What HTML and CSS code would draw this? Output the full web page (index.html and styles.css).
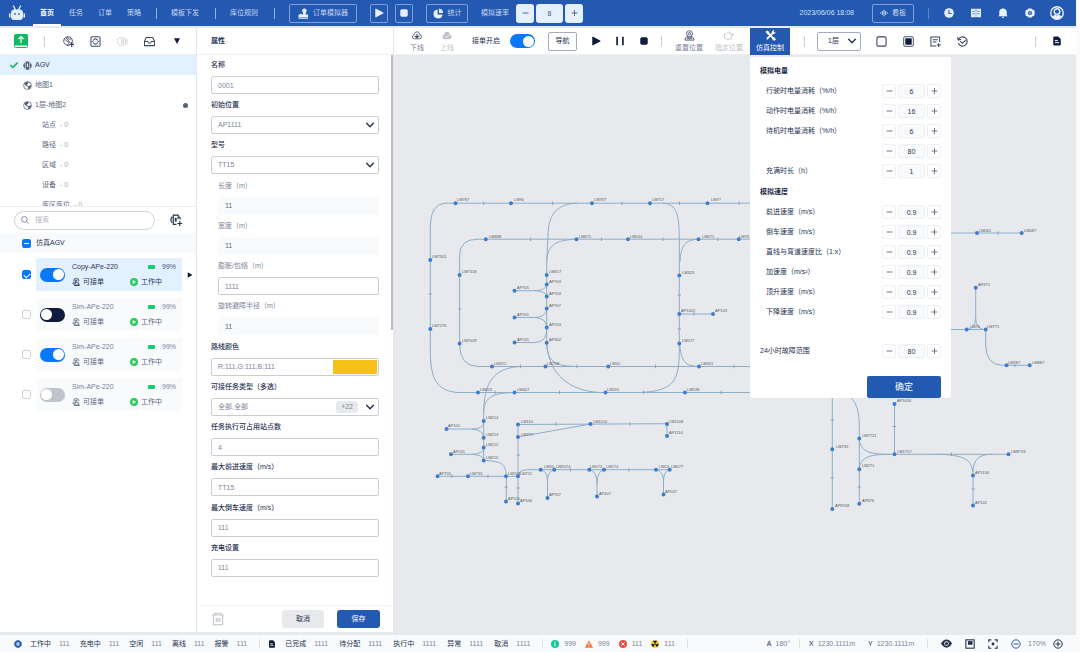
FILE: index.html
```html
<!DOCTYPE html>
<html lang="zh-CN">
<head>
<meta charset="utf-8">
<title>AGV 仿真调度</title>
<link rel="stylesheet" href="styles.css">
</head>
<body>
<svg class="sprite" aria-hidden="true">
  <symbol id="robot" viewBox="0 0 32 32"><path d="M9 2l4 8M23 2l-4 8" stroke="currentColor" stroke-width="2.6" stroke-linecap="round"/><path fill="currentColor" fill-rule="evenodd" d="M11 9h10q7 0 7 7v7q0 7-7 7H11q-7 0-7-7v-7q0-7 7-7zm1 7a1.500 1.500 0 0 0-1.500 1.500v1a1.500 1.500 0 0 0 3 0v-1A1.500 1.500 0 0 0 12 16zm8 0a1.500 1.500 0 0 0-1.500 1.500v1a1.500 1.500 0 0 0 3 0v-1A1.500 1.500 0 0 0 20 16z"/><path fill="currentColor" d="M0 17h3v8H0zM29 17h3v8h-3z"/></symbol>
  <symbol id="sim" viewBox="0 0 24 24"><circle cx="14" cy="6" r="5" fill="currentColor"/><path fill="currentColor" d="M11 9h6v5h5v6H1v-5l6-3 1 2h3zM1 21h21v2.500H1z"/></symbol>
  <symbol id="play" viewBox="0 0 24 24"><path fill="currentColor" d="M3 3q0-2 2-1l17 9q1.500 1 0 2L5 22q-2 1-2-1z"/></symbol>
  <symbol id="stop" viewBox="0 0 24 24"><rect x="3" y="3" width="18" height="18" rx="4" fill="currentColor"/></symbol>
  <symbol id="pause" viewBox="0 0 24 24"><path fill="currentColor" d="M3 2h4v20H3zM17 2h4v20h-4z"/></symbol>
  <symbol id="pie" viewBox="0 0 24 24"><path fill="currentColor" d="M10 3v11h11A10 10 0 1 1 10 3z"/><path fill="currentColor" d="M13 1a10 10 0 0 1 9 10h-9z"/></symbol>
  <symbol id="wave" viewBox="0 0 24 24"><path fill="none" stroke="currentColor" stroke-width="2.600" d="M2 10v4M7 6v12M12 2v20M17 6v12M22 10v4"/></symbol>
  <symbol id="clock" viewBox="0 0 24 24"><circle cx="12" cy="12" r="11.500" fill="currentColor"/><path d="M12 5v8h6" fill="none" stroke="#2459b2" stroke-width="2.600"/></symbol>
  <symbol id="book" viewBox="0 0 24 24"><path fill="currentColor" d="M0 2h11.500v20H0zM12.500 2H24v20H12.500z"/><path d="M3.500 8h5M3.500 14h5M15.500 8h5M15.500 14h5" stroke="#2459b2" stroke-width="2"/></symbol>
  <symbol id="bell" viewBox="0 0 24 24"><path fill="currentColor" d="M12 0q1.500 0 1.500 2Q21 3 21 10v7l2 3H1l2-3v-7q0-7 7.500-8Q10.500 0 12 0zM9 21h6q-1 3-3 3t-3-3z"/></symbol>
  <symbol id="gear" viewBox="0 0 24 24"><path fill="currentColor" fill-rule="evenodd" d="M8 1h8l2 3 4 1 1.500 7L22 19l-4 1-2 3H8l-2-3-4-1L.5 12 2 5l4-1zM12 7a5 5 0 1 0 0 10 5 5 0 0 0 0-10z"/><circle cx="12" cy="12" r="2" fill="currentColor"/></symbol>
  <symbol id="user" viewBox="0 0 24 24"><circle cx="12" cy="12" r="10.700" fill="none" stroke="currentColor" stroke-width="2.400"/><circle cx="12" cy="9.500" r="4.800" fill="none" stroke="currentColor" stroke-width="2.400"/><path fill="currentColor" d="M4 18q3-3 5-3 3 2 6 0 2 0 5 3-3 5-8 5t-8-5z"/></symbol>
  <symbol id="upload" viewBox="0 0 28 28"><path fill="#0dbb62" d="M3 0h22q3 0 3 3v19H0V3q0-3 3-3z"/><path d="M1 22v3q0 2 2 2h22q2 0 2-2v-3z" fill="#fff" stroke="#0dbb62" stroke-width="2"/><path d="M14 18V6M9 10l5-5 5 5" fill="none" stroke="#fff" stroke-width="2.400"/></symbol>
  <symbol id="globeadd" viewBox="0 0 24 24"><g fill="none" stroke="currentColor" stroke-width="1.800"><circle cx="11" cy="11" r="9.500"/><path d="M3 6q4 6 8 6l2 3q-4 2-3 6M10 2q0 5 5 5l4-1M7 3q0 4 4 5l5 8"/></g><path d="M19 13v11M14 18.500h10" stroke="currentColor" stroke-width="2.800"/></symbol>
  <symbol id="scan" viewBox="0 0 24 24"><g fill="none" stroke="currentColor" stroke-width="2.200"><rect x="2" y="1.500" width="20" height="21" rx="3"/><path d="M7 10q5-8 10 0M7 14q5 8 10 0M4 12h3M17 12h3"/></g></symbol>
  <symbol id="signal" viewBox="0 0 24 24"><g fill="none" stroke="currentColor" stroke-width="1.700"><path d="M9 3a9 9 0 1 0 0 18q5-2 5-9T9 3zM9 7q3 5 0 10M14 3q9 9 0 18M19 4q7 8 0 16"/></g></symbol>
  <symbol id="inbox" viewBox="0 0 24 24"><path fill="none" stroke="currentColor" stroke-width="2.200" d="M5 3.500h14l4 8V21H1v-9.500zM1 12h7q1 4 4 4t4-4h7"/></symbol>
  <symbol id="down" viewBox="0 0 24 24"><path fill="currentColor" d="M3 4h18l-9 17z"/></symbol>
  <symbol id="right" viewBox="0 0 24 24"><path fill="currentColor" d="M3 1l19 11L3 23z"/></symbol>
  <symbol id="chev" viewBox="0 0 24 24"><path fill="none" stroke="currentColor" stroke-width="3.400" stroke-linecap="round" d="M4 8l8 8 8-8"/></symbol>
  <symbol id="tick" viewBox="0 0 24 24"><path fill="none" stroke="#0dbb62" stroke-width="4.600" d="M1 12l7 7L23 5"/></symbol>
  <symbol id="agv" viewBox="0 0 24 24"><path fill="currentColor" d="M7 1h10v22H7zM6 3v18Q-5 12 6 3zM18 3v18q11-9 0-18z"/><path stroke="#e3f0ff" d="M6.500 2v20M17.500 2v20"/><rect x="10.500" y="7" width="3" height="9" fill="#e3f0ff"/></symbol>
  <symbol id="globe" viewBox="0 0 24 24"><circle cx="12" cy="12" r="10.500" fill="none" stroke="currentColor" stroke-width="2"/><path fill="currentColor" d="M3 7q5-6 10-5l2 4-5 4 4 4 6-3 2 1q-1 9-9 10l1-6-7-4z"/></symbol>
  <symbol id="search" viewBox="0 0 24 24"><g fill="none" stroke="currentColor" stroke-width="2.200"><circle cx="10" cy="10" r="8.500"/><path d="M16 16l7 7"/></g></symbol>
  <symbol id="agvadd" viewBox="0 0 26 24"><g fill="none" stroke="currentColor" stroke-width="2.200"><path d="M17 10V3H8v17h6M6 6q-5 5.500 0 11M19 6q2 2 2 5"/><path d="M12.500 8v7" stroke-width="3.400"/><path d="M20 14v9M15.500 18.500h9"/></g></symbol>
  <symbol id="hand" viewBox="0 0 24 24"><g fill="none" stroke="currentColor" stroke-width="2.600"><path d="M6 10V5q0-3 4-3h6q4 0 4 4v4M10 12V7q2-3 4 0v7l6 1 1 6H8l-6-6 4-1 4 3v-5M6 22.500h17"/></g></symbol>
  <symbol id="run" viewBox="0 0 24 24"><circle cx="12" cy="12" r="12" fill="#2dca61"/><path fill="#fff" d="M8 6l10 6-10 6z"/></symbol>
  <symbol id="cloud" viewBox="0 0 24 20"><path fill="none" stroke="currentColor" stroke-width="2" d="M6 18q-5 0-5-5 0-4 4-5 1-7 7-7t7 7q4 1 4 5 0 5-5 5z"/><path fill="none" stroke="currentColor" stroke-width="2.600" d="M12 6v6M8 12l4 4 4-4z"/></symbol>
  <symbol id="cloudfill" viewBox="0 0 24 20"><path fill="currentColor" d="M6 19q-5 0-5-6 0-4 4-5 1-7 7-7t7 7q4 1 4 5 0 6-5 6z"/><path fill="none" stroke="#fff" stroke-width="2" d="M7 11l4 4 6-6"/></symbol>
  <symbol id="pin" viewBox="0 0 24 24"><g fill="none" stroke="currentColor" stroke-width="2"><circle cx="12" cy="8" r="6.500"/><circle cx="12" cy="8" r="2.500"/><path d="M8 13l-1 4h10l-1-4M5 15l-3 7h20l-3-7M7 19h10"/></g></symbol>
  <symbol id="point" viewBox="0 0 24 24"><path fill="none" stroke="currentColor" stroke-width="2" d="M1 9h4l6-6q4 0 2 5h9q2 2 0 4h-4q2 2 0 3 1 2-1 3 0 3-3 3H6l-2-2H1z"/></symbol>
  <symbol id="tools" viewBox="0 0 24 24"><path fill="none" stroke="currentColor" stroke-width="4" d="M5 5l14 14M19 4L4 20"/><path fill="currentColor" d="M1 4l4-3 5 4-4 5zM15 3q3-3 6-2l-3 3 2 2 3-2q0 5-4 6z"/><path fill="currentColor" d="M16 16l3-1 5 5-4 4-5-5z"/></symbol>
  <symbol id="square" viewBox="0 0 24 24"><rect x="2" y="2" width="20" height="20" rx="3" fill="none" stroke="currentColor" stroke-width="2.400"/></symbol>
  <symbol id="squarefill" viewBox="0 0 24 24"><rect x="1.500" y="1.500" width="21" height="21" rx="3" fill="none" stroke="currentColor" stroke-width="2"/><rect x="5" y="5" width="14" height="14" fill="#101c3d"/></symbol>
  <symbol id="noteadd" viewBox="0 0 24 24"><path fill="none" stroke="currentColor" stroke-width="2.200" d="M21 13V2H2v20h11M6 8h11M6 13h8M19 15v9M14.500 19.500h9"/></symbol>
  <symbol id="history" viewBox="0 0 24 24"><path fill="none" stroke="currentColor" stroke-width="2.400" d="M3 8a10 10 0 1 1 0 8M1 3l2 6 6-2M7 11l5 5 7-7"/></symbol>
  <symbol id="doc" viewBox="0 0 24 24"><path fill="currentColor" d="M3 4q0-3 3-3h9l6 6v13q0 3-3 3H6q-3 0-3-3z"/><path d="M7 11h7M7 16h10" stroke="#fff" stroke-width="2.400"/></symbol>
  <symbol id="trash" viewBox="0 0 24 24"><path fill="none" stroke="currentColor" stroke-width="1.800" d="M2 5h20M7 5V2h10v3M4 5v17h16V5M9 10v7M12 10v7M15 10v7"/></symbol>
  <symbol id="info" viewBox="0 0 24 24"><circle cx="12" cy="12" r="12" fill="#10c997"/><path d="M12 10v9M12 4.500v3.500" stroke="#fff" stroke-width="3"/></symbol>
  <symbol id="warn" viewBox="0 0 24 24"><path d="M12 1l12 22H0z" fill="#f5743a"/><path d="M12 8v7M12 17v3" stroke="#fff" stroke-width="2.600"/></symbol>
  <symbol id="error" viewBox="0 0 24 24"><circle cx="12" cy="12" r="12" fill="#ec4a43"/><path d="M7 7l10 10M17 7L7 17" stroke="#fff" stroke-width="3"/></symbol>
  <symbol id="nuclear" viewBox="0 0 24 24"><circle cx="12" cy="12" r="11.500" fill="#f6c515"/><path d="M12 12L6 2h12zM12 12l12 1-6 9zM12 12L0 13l6 9z" fill="#111a35"/></symbol>
  <symbol id="eye" viewBox="0 0 24 18"><path fill="currentColor" d="M0 9q5-9 12-9t12 9q-5 9-12 9T0 9z"/><circle cx="12" cy="9" r="5" fill="#fff"/><circle cx="12" cy="9" r="3.400" fill="currentColor"/></symbol>
  <symbol id="corner" viewBox="0 0 24 24"><rect x="2" y="2" width="20" height="20" fill="none" stroke="currentColor" stroke-width="2.600"/><path fill="currentColor" d="M7 5h11v9H7z"/></symbol>
  <symbol id="focus" viewBox="0 0 24 24"><path fill="none" stroke="currentColor" stroke-width="2.600" d="M2 8V2h6M16 2h6v6M22 16v6h-6M8 22H2v-6"/><circle cx="12" cy="12" r="3.500" fill="currentColor"/></symbol>
  <symbol id="zoomout" viewBox="0 0 24 24"><g fill="none" stroke="currentColor" stroke-width="2.400"><circle cx="12" cy="12" r="10"/><path d="M6 12h12"/></g></symbol>
  <symbol id="zoomin" viewBox="0 0 24 24"><g fill="none" stroke="currentColor" stroke-width="2.400"><circle cx="12" cy="12" r="10"/><path d="M6 12h12M12 6v12"/></g></symbol>
  <symbol id="minus" viewBox="0 0 24 24"><path stroke="currentColor" stroke-width="3" d="M2 12h20"/></symbol>
  <symbol id="plus" viewBox="0 0 24 24"><path stroke="currentColor" stroke-width="3" d="M2 12h20M12 2v20"/></symbol>
</svg>

<div class="app">
  <header class="topbar">
    <svg class="logo"><use href="#robot"/></svg>
    <nav class="nav">
      <a class="nav-link current" href="#">首页</a><a class="nav-link" href="#">任务</a><a class="nav-link" href="#">订单</a><a class="nav-link" href="#">策略</a>
    </nav>
    <i class="split"></i><a class="plain-link" href="#">模板下发</a>
    <i class="split"></i><a class="plain-link" href="#">库位规则</a>
    <i class="split"></i>
    <button class="top-btn wide"><svg class="ic12"><use href="#sim"/></svg>订单模拟器</button>
    <button class="top-btn icon-only gap-l" aria-label="播放"><svg class="ic10"><use href="#play"/></svg></button>
    <button class="top-btn icon-only" aria-label="停止"><svg class="ic10"><use href="#stop"/></svg></button>
    <button class="top-btn medium"><svg class="ic12"><use href="#pie"/></svg>统计</button>
    <label class="rate" for="rate">模拟速率</label>
    <div class="rate-stepper">
      <button aria-label="减"><svg class="ic8"><use href="#minus"/></svg></button><input id="rate" value="8"><button aria-label="加"><svg class="ic8"><use href="#plus"/></svg></button>
    </div>
    <time class="clock">2023/06/06 18:08</time>
    <button class="top-btn medium"><svg class="ic8"><use href="#wave"/></svg>看板</button>
    <i class="split end"></i>
    <button class="top-icon" aria-label="时间"><svg class="ic10"><use href="#clock"/></svg></button>
    <button class="top-icon" aria-label="手册"><svg class="ic10"><use href="#book"/></svg></button>
    <button class="top-icon" aria-label="通知"><svg class="ic10"><use href="#bell"/></svg></button>
    <button class="top-icon" aria-label="设置"><svg class="ic10"><use href="#gear"/></svg></button>
    <button class="top-icon" aria-label="用户"><svg class="ic14"><use href="#user"/></svg></button>
  </header>

  <div class="workspace">
    <aside class="panel">
      <div class="panel-bar side-tools">
        <button aria-label="上传"><svg class="ic14"><use href="#upload"/></svg></button>
        <i class="rule"></i>
        <button aria-label="新增地图"><svg class="ic12"><use href="#globeadd"/></svg></button>
        <button aria-label="扫描"><svg class="ic12"><use href="#scan"/></svg></button>
        <button class="off" aria-label="信号"><svg class="ic12"><use href="#signal"/></svg></button>
        <button aria-label="收件"><svg class="ic12"><use href="#inbox"/></svg></button>
        <button class="dark" aria-label="更多"><svg class="ic8"><use href="#down"/></svg></button>
      </div>
      <ul class="tree">
        <li class="node active"><svg class="ic8"><use href="#tick"/></svg><svg class="ic10"><use href="#agv"/></svg>AGV</li>
        <li class="node"><svg class="ic8"></svg><svg class="ic10"><use href="#globe"/></svg>地图1</li>
        <li class="node"><svg class="ic8"></svg><svg class="ic10"><use href="#globe"/></svg>1层-地图2<i class="dot"></i></li>
        <li class="leaf">站点 <span>- 0</span></li>
        <li class="leaf">路径 <span>- 0</span></li>
        <li class="leaf">区域 <span>- 0</span></li>
        <li class="leaf">设备 <span>- 0</span></li>
        <li class="leaf">库区库位 <span>- 0</span></li>
      </ul>
      <div class="search-row">
        <label class="search"><svg class="ic8"><use href="#search"/></svg><input type="text" placeholder="搜索" aria-label="搜索"></label>
        <button aria-label="新增AGV"><svg class="ic14"><use href="#agvadd"/></svg></button>
      </div>
      <label class="group"><input class="check mixed" type="checkbox">仿真AGV</label>
      <ul class="agvs">
        <li class="agv-row">
          <input class="check" type="checkbox" checked aria-label="选择 Copy-APe-220">
          <div class="agv chosen"><input class="switch" type="checkbox" checked aria-label="启用">
            <div class="agv-info"><b>Copy-APe-220</b><span class="power"><i></i>99%</span><span class="state"><svg class="ic8"><use href="#hand"/></svg>可接单</span><span class="state"><svg class="ic8"><use href="#run"/></svg>工作中</span></div>
          </div><svg class="ic6"><use href="#right"/></svg>
        </li>
        <li class="agv-row">
          <input class="check" type="checkbox" aria-label="选择 Sim-APe-220">
          <div class="agv"><input class="switch navy" type="checkbox" aria-label="启用">
            <div class="agv-info"><b>Sim-APe-220</b><span class="power"><i></i>99%</span><span class="state"><svg class="ic8"><use href="#hand"/></svg>可接单</span><span class="state"><svg class="ic8"><use href="#run"/></svg>工作中</span></div>
          </div>
        </li>
        <li class="agv-row">
          <input class="check" type="checkbox" aria-label="选择 Sim-APe-220">
          <div class="agv"><input class="switch" type="checkbox" checked aria-label="启用">
            <div class="agv-info"><b>Sim-APe-220</b><span class="power"><i></i>99%</span><span class="state"><svg class="ic8"><use href="#hand"/></svg>可接单</span><span class="state"><svg class="ic8"><use href="#run"/></svg>工作中</span></div>
          </div>
        </li>
        <li class="agv-row">
          <input class="check" type="checkbox" aria-label="选择 Sim-APe-220">
          <div class="agv"><input class="switch" type="checkbox" aria-label="启用">
            <div class="agv-info"><b>Sim-APe-220</b><span class="power"><i></i>99%</span><span class="state"><svg class="ic8"><use href="#hand"/></svg>可接单</span><span class="state"><svg class="ic8"><use href="#run"/></svg>工作中</span></div>
          </div>
        </li>
      </ul>
    </aside>

    <aside class="panel props">
      <h2 class="panel-bar props-title">属性</h2>
      <form class="form">
        <i class="scrollbar"></i>
        <div class="field"><label for="f1">名称</label><div class="control"><input id="f1" value="0001"></div></div>
        <div class="field"><label for="f2">初始位置</label><div class="control"><select id="f2"><option>AP1111</option></select><svg class="ic10"><use href="#chev"/></svg></div></div>
        <div class="field"><label for="f3">型号</label><div class="control"><select id="f3"><option>TT15</option></select><svg class="ic10"><use href="#chev"/></svg></div></div>
        <div class="field sub"><label for="f4">长度（m）</label><div class="control locked"><input id="f4" value="11" readonly></div></div>
        <div class="field sub"><label for="f5">宽度（m）</label><div class="control locked"><input id="f5" value="11" readonly></div></div>
        <div class="field sub"><label for="f6">膨胀/包络（m）</label><div class="control"><input id="f6" value="1111"></div></div>
        <div class="field sub"><label for="f7">旋转避障半径（m）</label><div class="control locked"><input id="f7" value="11" readonly></div></div>
        <div class="field"><label for="f8">路线颜色</label><div class="control"><input id="f8" value="R:111,G:111,B:111"><i class="swatch"></i></div></div>
        <div class="field"><label for="f9">可接任务类型（多选）</label><div class="control"><select id="f9"><option>全部,全部</option></select><span class="count">+22</span><svg class="ic10"><use href="#chev"/></svg></div></div>
        <div class="field"><label for="f10">任务执行可占用站点数</label><div class="control"><input id="f10" value="4"></div></div>
        <div class="field"><label for="f11">最大前进速度（m/s）</label><div class="control"><input id="f11" value="TT15"></div></div>
        <div class="field"><label for="f12">最大倒车速度（m/s）</label><div class="control"><input id="f12" value="111"></div></div>
        <div class="field"><label for="f13">充电设置</label><div class="control"><input id="f13" value="111"></div></div>
      </form>
      <div class="actions">
        <button class="trash" aria-label="删除"><svg class="ic14"><use href="#trash"/></svg></button>
        <button class="btn">取消</button><button class="btn primary">保存</button>
      </div>
    </aside>

    <main class="stage">
      <div class="panel-bar map-tools">
        <button class="stack"><svg class="ic10"><use href="#cloud"/></svg><span>下线</span></button>
        <button class="stack faded"><svg class="ic10"><use href="#cloudfill"/></svg><span>上线</span></button>
        <label class="accept" for="accept">接单开启</label><input id="accept" class="switch" type="checkbox" checked>
        <button class="nav-btn">导航</button>
        <div class="transport">
          <button aria-label="播放"><svg class="ic10"><use href="#play"/></svg></button><button aria-label="暂停"><svg class="ic10"><use href="#pause"/></svg></button><button aria-label="停止"><svg class="ic10"><use href="#stop"/></svg></button>
        </div>
        <i class="rule"></i>
        <button class="stack reset"><svg class="ic12"><use href="#pin"/></svg><span>重置位置</span></button>
        <button class="stack faded assign"><svg class="ic10"><use href="#point"/></svg><span>指定位置</span></button>
        <div class="sim-menu">
          <button class="stack sim-btn"><svg class="ic12"><use href="#tools"/></svg><span>仿真控制</span></button>
          <section class="popup">
            <h3>模拟电量</h3>
            <div class="param"><label for="p1">行驶时电量消耗（%/h）</label><div class="stepper"><button aria-label="减"><svg class="ic8"><use href="#minus"/></svg></button><input id="p1" value="6"><button aria-label="加"><svg class="ic8"><use href="#plus"/></svg></button></div></div>
            <div class="param"><label for="p2">动作时电量消耗（%/h）</label><div class="stepper"><button aria-label="减"><svg class="ic8"><use href="#minus"/></svg></button><input id="p2" value="16"><button aria-label="加"><svg class="ic8"><use href="#plus"/></svg></button></div></div>
            <div class="param"><label for="p3">待机时电量消耗（%/h）</label><div class="stepper"><button aria-label="减"><svg class="ic8"><use href="#minus"/></svg></button><input id="p3" value="6"><button aria-label="加"><svg class="ic8"><use href="#plus"/></svg></button></div></div>
            <div class="param"><div class="stepper"><button aria-label="减"><svg class="ic8"><use href="#minus"/></svg></button><input aria-label="电量" value="80"><button aria-label="加"><svg class="ic8"><use href="#plus"/></svg></button></div></div>
            <div class="param"><label for="p5">充满时长（h）</label><div class="stepper"><button aria-label="减"><svg class="ic8"><use href="#minus"/></svg></button><input id="p5" value="1"><button aria-label="加"><svg class="ic8"><use href="#plus"/></svg></button></div></div>
            <h3>模拟速度</h3>
            <div class="param"><label for="p6">前进速度（m/s）</label><div class="stepper"><button aria-label="减"><svg class="ic8"><use href="#minus"/></svg></button><input id="p6" value="0.9"><button aria-label="加"><svg class="ic8"><use href="#plus"/></svg></button></div></div>
            <div class="param"><label for="p7">倒车速度（m/s）</label><div class="stepper"><button aria-label="减"><svg class="ic8"><use href="#minus"/></svg></button><input id="p7" value="0.9"><button aria-label="加"><svg class="ic8"><use href="#plus"/></svg></button></div></div>
            <div class="param"><label for="p8">直线与弯道速度比（1:x）</label><div class="stepper"><button aria-label="减"><svg class="ic8"><use href="#minus"/></svg></button><input id="p8" value="0.9"><button aria-label="加"><svg class="ic8"><use href="#plus"/></svg></button></div></div>
            <div class="param"><label for="p9">加速度（m/s²）</label><div class="stepper"><button aria-label="减"><svg class="ic8"><use href="#minus"/></svg></button><input id="p9" value="0.9"><button aria-label="加"><svg class="ic8"><use href="#plus"/></svg></button></div></div>
            <div class="param"><label for="p10">顶升速度（m/s）</label><div class="stepper"><button aria-label="减"><svg class="ic8"><use href="#minus"/></svg></button><input id="p10" value="0.9"><button aria-label="加"><svg class="ic8"><use href="#plus"/></svg></button></div></div>
            <div class="param"><label for="p11">下降速度（m/s）</label><div class="stepper"><button aria-label="减"><svg class="ic8"><use href="#minus"/></svg></button><input id="p11" value="0.9"><button aria-label="加"><svg class="ic8"><use href="#plus"/></svg></button></div></div>
            <div class="param fault"><label for="p12">24小时故障范围</label><div class="stepper"><button aria-label="减"><svg class="ic8"><use href="#minus"/></svg></button><input id="p12" value="80"><button aria-label="加"><svg class="ic8"><use href="#plus"/></svg></button></div></div>
            <button class="confirm">确定</button>
          </section>
        </div>
        <i class="rule after-sim"></i>
        <div class="control floor"><select aria-label="楼层"><option>1层</option></select><svg class="ic10"><use href="#chev"/></svg></div>
        <div class="view-tools">
          <button aria-label="框选"><svg class="ic12"><use href="#square"/></svg></button><button aria-label="全选"><svg class="ic12"><use href="#squarefill"/></svg></button><button aria-label="新增记录"><svg class="ic12"><use href="#noteadd"/></svg></button><button aria-label="历史"><svg class="ic12"><use href="#history"/></svg></button>
        </div>
        <i class="rule last"></i>
        <button class="dark doc-btn" aria-label="文档"><svg class="ic10"><use href="#doc"/></svg></button>
      </div>
      <div class="canvas">
        <svg class="map" viewBox="394 55 682 577" preserveAspectRatio="xMinYMin slice" role="img" aria-label="路径地图">
          <g class="lines">
            <path d="M760 203.200H445Q431 204 430.300 225V350C430.500 375 434 391 458 392.500H760"/>
            <path d="M760 239.200H478Q460 239 459.600 255V345Q460 366 478 366.500H760"/>
            <path d="M577 203.200C556 204 548.500 215 548 235L546.700 262V345C548 362 555 366 577 366.500M576 239.200C556 240 547 245 546.700 262M547 345C549 375 570 391 600 392.500"/>
            <path d="M514.500 290.700H535Q546 290 546.700 285M535 290.700Q546 291 546.700 297M514.500 317.500H535Q546 317 546.700 309M535 317.500Q546 318 546.700 327M514.500 342.500H535Q547 342 546.700 329"/>
            <path d="M663 203.200C677 204 679.300 215 679.300 240V350C679 380 675 391 640 392.500M698.500 239.200C685 240 681 245 680 262M679.500 342C681 362 685 366 699 366.500M679.300 314H713"/>
            <path d="M520 366.500C500 368 484 375 483.700 412V460.500C500 461 506 463 506.300 476V501.500M514 392.500C495 393 484 396 483.700 412"/>
            <path d="M446.500 429H472Q483 429 483.700 423M472 429Q483 430 483.700 437M451 454.300H472Q483 454 483.700 448M472 454.300Q483 455 483.700 460M437.500 476.300H518"/>
            <path d="M518 503.500V424.500L667 423.700V436M518 437L590.500 424M518 476Q519 469.700 528 469.700H670"/>
            <path d="M540.700 469.700Q547 471 547.500 480V498M554.300 469.700Q548 471 547.500 480M589.300 469.700Q597 471 597 484V496.500M604 469.700Q597 471 597 484M656 469.700Q663 471 663.500 480V494.500M669.700 469.700Q664 471 663.500 480"/>
            <path d="M940 233H1021.700M940 329.500H985.700V345Q986 365 1002 365.300H1029.700M975.700 287.700V318Q976 328 983 329.500M975.700 318Q975 328 968 329.500"/>
            <path d="M832.300 390V509M848 394C859 405 859.300 415 859.300 430V503.700M894.500 404V454.300H1008.500M859.300 440C861 452 870 454.300 890 454.300H895M859.300 468C861 457 870 454.300 890 454.300M935 454.300C965 454.300 973 460 973 475.500V505.500M992 454.300C978 454.300 973.500 460 973 472"/>
            <path class="ticks" d="M483.700 201.500v3.500M552.500 201.500v3.500M622 201.500v3.500M679.500 201.500v3.500M739 201.500v3.500M530.500 237.500v3.500M601.500 237.500v3.500M663 237.500v3.500M718 237.500v3.500M428.500 294h3.500M458 309h3.500M677.500 295h3.500M677.500 329h3.500M694 312v3.500M520.500 364.700v3.500M577 364.700v3.500M655.500 364.700v3.500M734 364.700v3.500M495 390.700v3.500M559.500 390.700v3.500M643.500 390.700v3.500M721 390.700v3.500M556 422.300v3.500M630 422.300v3.500M452 474.500v3.500M488 474.500v3.500M570.500 468v3.500M629 468v3.500M516.500 455h3.500M504.500 487h3.500M516.500 488h3.500M830.500 420h3.500M830.500 478h3.500M857.500 487h3.500M892.500 426.500h3.500M971.500 489h3.500M951.500 452.500v3.500M998 231.300v3.500M1015 363.500v3.500"/>
          </g>
          <path class="stations" d="M455.500 203.200h0M511 203.200h0M592 203.200h0M650 203.200h0M707.500 203.200h0M430.300 260h0M430.300 329h0M478 392.500h0M514.500 392.500h0M605.500 392.500h0M685 392.500h0M485.800 239.200h0M576.500 239.200h0M628 239.200h0M698.500 239.200h0M738.700 239.200h0M459.600 275h0M459.600 343.500h0M492 366.500h0M545.500 366.500h0M608.300 366.500h0M699 366.500h0M546.700 275h0M546.700 284.500h0M546.700 296.500h0M546.700 308.500h0M546.700 327.500h0M546.700 342.700h0M514.500 290.700h0M514.500 317.500h0M514.500 342.500h0M679.300 275.500h0M679.300 314h0M713 314h0M679.300 343.500h0M483.700 421h0M483.700 437.700h0M483.700 447.500h0M483.700 460.500h0M446.500 429h0M451 454.300h0M437.500 476.300h0M468 476.300h0M506 476.300h0M518 476.300h0M506 501.500h0M518 503.500h0M518 424.500h0M518 437h0M590.500 424h0M667 424h0M667 436h0M540.700 469.700h0M554.300 469.700h0M589.300 469.700h0M604 469.700h0M656 469.700h0M669.700 469.700h0M547.500 498h0M597 496.500h0M663.500 494.500h0M977 233h0M1021.700 233h0M975.700 287.700h0M966.700 329.500h0M985.700 329.500h0M1006.500 365.300h0M1029.700 365.300h0M832.300 449.300h0M832.300 509h0M859.300 438.500h0M859.300 469.300h0M859.300 503.700h0M894.500 404h0M894.500 454.300h0M1008.500 454.300h0M973 475.500h0M973 505.500h0"/>
          <g class="names">
            <text x="457" y="201">LM787</text><text x="514" y="201">LM90</text><text x="594" y="201">LM767</text><text x="652" y="201">LM717</text><text x="711" y="201">LM77</text>
            <text x="432" y="258">LM7301</text><text x="432" y="327">LM7276</text><text x="480" y="391">LM624</text><text x="517" y="391">LM407</text><text x="607" y="391">LM205</text><text x="687" y="391">LM538</text>
            <text x="489" y="238">LM688</text><text x="579" y="238">LM675</text><text x="630" y="238">LM544</text><text x="702" y="238">LM671</text><text x="739" y="238">LM76</text>
            <text x="462" y="273">LM7318</text><text x="462" y="342">LM7028</text><text x="494" y="365">LM322</text><text x="547" y="365">LM708</text><text x="610" y="365">LM50</text><text x="701" y="365">LM341</text>
            <text x="549" y="273">LM617</text><text x="549" y="283">AP703</text><text x="549" y="295">AP704</text><text x="549" y="307">AP707</text><text x="549" y="326">AP203</text><text x="549" y="341">AP302</text>
            <text x="517" y="289">AP705</text><text x="517" y="316">AP201</text><text x="517" y="341">AP531</text>
            <text x="682" y="274">LM323</text><text x="681" y="312">AP1002</text><text x="715" y="312">AP103</text><text x="682" y="342">LM227</text>
            <text x="486" y="419">LM214</text><text x="486" y="436">LM213</text><text x="486" y="446">LM212</text><text x="486" y="459">LM215</text><text x="448" y="427">AP101</text><text x="453" y="453">AP531</text>
            <text x="439" y="475">AP705</text><text x="470" y="475">LM733</text><text x="508" y="475">LM703</text><text x="520" y="475">LM711</text><text x="508" y="500">AP501</text><text x="520" y="502">AP506</text>
            <text x="521" y="423">LM110</text><text x="521" y="436">LM777</text><text x="593" y="423">LM1100</text><text x="669" y="423">LM1108</text><text x="669" y="434">AP1114</text>
            <text x="544" y="468">LM20</text><text x="556" y="468">LM2074</text><text x="590" y="468">LM175</text><text x="606" y="468">LM174</text><text x="659" y="468">LM14</text><text x="671" y="468">LM077</text>
            <text x="549" y="496">AP707</text><text x="599" y="495">AP407</text><text x="665" y="493">AP047</text>
            <text x="979" y="232">LM061</text><text x="1024" y="232">LM087</text><text x="978" y="286">AP471</text><text x="970" y="328">LM76</text><text x="987" y="328">LM771</text><text x="1008" y="364">LM787</text><text x="1032" y="364">LM887</text>
            <text x="836" y="448">LM733</text><text x="835" y="507">AP8708</text><text x="862" y="437">LM7721</text><text x="862" y="467">LM271</text><text x="862" y="502">AP876</text><text x="897" y="402">AP3434</text><text x="897" y="453">LM1757</text><text x="1011" y="453">LM8733</text><text x="975" y="474">AP1134</text><text x="975" y="504">AP142</text>
          </g>
        </svg>
      </div>
    </main>
  </div>

  <footer class="status">
    <div class="status-group robots"><svg class="ic8 blue"><use href="#gear"/></svg><span>工作中<em>111</em></span><span>充电中<em>111</em></span><span>空闲<em>111</em></span><span>离线<em>111</em></span><span>报警<em>111</em></span></div>
    <i class="rule"></i>
    <div class="status-group orders"><svg class="ic8 dark"><use href="#doc"/></svg><span>已完成<em>1111</em></span><span>待分配<em>1111</em></span><span>执行中<em>1111</em></span><span>异常<em>1111</em></span><span>取消<em>1111</em></span></div>
    <i class="rule"></i>
    <div class="status-group alerts"><span class="alert"><svg class="ic8"><use href="#info"/></svg>999</span><span class="alert"><svg class="ic8"><use href="#warn"/></svg>999</span><span class="alert"><svg class="ic8"><use href="#error"/></svg>111</span><span class="alert"><svg class="ic8"><use href="#nuclear"/></svg>111</span></div>
    <i class="rule"></i>
    <div class="readout">
      <span>A<em>180°</em></span><i class="rule tight"></i><span>X<em>1230.1111m</em></span><span>Y<em>1230.1111m</em></span><i class="rule"></i>
      <button aria-label="显示"><svg class="ic12"><use href="#eye"/></svg></button>
      <button aria-label="小地图"><svg class="ic10"><use href="#corner"/></svg></button>
      <button aria-label="居中"><svg class="ic10"><use href="#focus"/></svg></button>
      <div class="zoom"><button class="blue" aria-label="缩小"><svg class="ic10"><use href="#zoomout"/></svg></button><output>170%</output><button aria-label="放大"><svg class="ic10"><use href="#zoomin"/></svg></button></div>
    </div>
  </footer>
</div>
</body>
</html>
```
FILE: styles.css
```css
* { box-sizing: border-box; }

body {
  margin: 0;
  background: #fbfbfc;
  color: #27324f;
  font: 7px/10px "Liberation Sans", "Noto Sans CJK SC", sans-serif;
}

button, input, select { font: inherit; color: inherit; margin: 0; padding: 0; border: 0; background: none; min-width: 0; }
button { display: flex; align-items: center; justify-content: center; white-space: nowrap; cursor: pointer; }
select { appearance: none; }
input:focus, select:focus { outline: none; }
a { color: inherit; text-decoration: none; }
ul { list-style: none; margin: 0; padding: 0; }
h2, h3 { margin: 0; font-size: 7px; font-weight: 700; }
em { font-style: normal; }
svg { flex: none; display: block; }

.sprite { position: absolute; width: 0; height: 0; }
.ic6 { width: 6px; height: 8px; }
.ic8 { width: 8px; height: 8px; }
.ic10 { width: 10px; height: 10px; }
.ic12 { width: 11px; height: 11px; }
.ic14 { width: 14px; height: 14px; }

.app { display: flex; flex-direction: column; height: 100vh; margin-right: 4px; background: #e7e9ec; }

/* Top bar */
.topbar { display: flex; align-items: center; height: 26px; padding: 0 6px 0 9px; background: #2459b2; color: #c6d6f0; white-space: nowrap; }
.logo { width: 16px; height: 16px; margin-right: 8px; color: #e6f0ff; }
.nav { display: flex; gap: 1px; align-self: stretch; margin-right: -8px; }
.nav-link { display: flex; align-items: center; padding: 2px 7px 0; border-bottom: 2px solid transparent; }
.nav-link.current { color: #fff; border-color: #fff; font-weight: 700; }
.split { width: 1px; height: 11px; margin: 0 14px 0 16px; background: #8cb6ec; }
.split.end { margin: 0 6px 0 14px; background: #5b85c8; }
.top-btn { height: 19px; gap: 4px; border: 1px solid #7f9fd6; border-radius: 2px; }
.top-btn svg { color: #e6f0ff; }
.top-btn.wide { width: 68px; }
.top-btn.medium { width: 42px; }
.top-btn.icon-only { width: 18px; margin-right: 7px; }
.top-btn.gap-l { margin-left: 13px; }
.top-btn.icon-only + .medium { margin-left: 6px; }
.rate { margin: 0 7px 0 13px; }
.rate-stepper { display: flex; gap: 2px; color: #4a5570; }
.rate-stepper > * { width: 18px; height: 19px; background: #e3f0ff; border-radius: 3px; text-align: center; }
.rate-stepper input { width: 27px; }
.rate-stepper svg { width: 7px; }
.clock { margin: 0 18px 0 auto; color: #d3e0f5; }
.top-icon { width: 27px; height: 20px; color: #e6f0ff; }

/* Workspace */
.workspace { display: grid; grid-template-columns: 197px 197px 1fr; flex: 1; min-height: 0; padding: 2px 0 3px; }
.panel { display: flex; flex-direction: column; min-height: 0; background: #fff; border-right: 1px solid #e4e6ea; }
.panel-bar { display: flex; align-items: center; flex: none; height: 27px; background: #fff; border-bottom: 1px solid #eef0f2; }
.rule { flex: none; width: 1px; height: 11px; background: #ccd0d8; }
.off { color: #bfc3cc; }
.dark { color: #101c3d; }

.side-tools { padding-left: 14px; color: #3a4562; }
.side-tools .rule { margin: 0 10px 0 16px; }
.side-tools .rule ~ button { width: 27px; height: 20px; }

.tree { flex: none; height: 152px; overflow: hidden; border-bottom: 1px solid #eceef1; color: #5d6780; }
.tree li { display: flex; align-items: center; height: 20px; white-space: nowrap; }
.node { gap: 5px; padding: 0 8px 0 10px; }
.node.active { background: #e3f0ff; color: #2c3856; }
.node svg { color: #56617c; }
.node svg + svg { width: 9px; height: 9px; margin-right: -2px; }
.dot { width: 5px; height: 5px; margin-left: auto; border-radius: 50%; background: #56617c; }
.leaf { gap: 4px; padding-left: 42px; }
.leaf span { color: #a8aebb; }

.search-row { display: flex; align-items: center; gap: 14px; flex: none; height: 26px; padding-left: 14px; }
.search { display: flex; align-items: center; gap: 6px; width: 141px; height: 19px; padding: 0 6px; border: 1px solid #ccd0d8; border-radius: 10px; color: #5d6780; }
.search input { flex: 1; }
.search input::placeholder { color: #b3b8c3; opacity: 1; }
.group { display: flex; align-items: center; gap: 5px; flex: none; height: 20px; padding-left: 22px; background: #f8fafc; }

.check { appearance: none; display: grid; place-items: center; flex: none; width: 9px; height: 9px; border: 1px solid #ccd0d8; border-radius: 2px; background: #fff; }
.check:checked, .check.mixed { border-color: #0a78fb; background: #0a78fb; }
.check.mixed::before { content: ""; width: 5px; height: 1px; background: #fff; }
.check:checked::before { content: ""; width: 5px; height: 3px; border: solid #fff; border-width: 0 0 1px 1px; transform: rotate(-45deg); }

.switch { appearance: none; display: flex; align-items: center; flex: none; width: 25px; height: 14px; padding: 0 1px; border-radius: 7px; background: #bfc3cc; }
.switch::before { content: ""; width: 11px; height: 11px; border-radius: 50%; background: #fff; }
.switch.navy { background: #101c3d; }
.switch:checked { justify-content: flex-end; background: #0a78fb; }

.agvs { display: grid; gap: 7px; padding-top: 5px; }
.agv-row { display: flex; align-items: center; gap: 5px; padding-left: 22px; color: #101c3d; }
.agv { display: flex; align-items: center; gap: 7px; width: 146px; height: 33px; padding-left: 4px; border-radius: 2px; background: #f8fafc; color: #5d6780; }
.agv.chosen { background: #e3f0ff; color: #2c3856; }
.agv-info { display: grid; grid-template-columns: 58px 46px; row-gap: 5px; white-space: nowrap; }
.agv-info b { font-weight: 400; color: #7c8498; }
.chosen .agv-info b { color: #2c3856; }
.power { display: flex; align-items: center; justify-content: flex-end; gap: 7px; color: #7c8498; }
.power i { width: 7px; height: 4px; border-radius: 1px; background: #0fce6d; }
.chosen .power { color: #4a5570; }
.state { display: flex; align-items: center; gap: 3px; }

/* Properties */
.props-title { padding-left: 14px; }
.form { position: relative; display: grid; grid-auto-rows: 1fr; flex: 1; min-height: 0; padding: 0 14px 27px; }
.scrollbar { position: absolute; top: 0; right: 0; width: 2px; height: 50%; background: #b7bbc8; }
.field { display: flex; flex-direction: column; gap: 6px; padding-top: 5px; min-height: 0; font-weight: 500; }
.field.sub { padding-left: 7px; font-weight: 400; color: #7c8498; }
.control { display: flex; align-items: center; flex: none; height: 18px; padding: 0 3px 0 6px; border: 1px solid #c9cdd5; border-radius: 2px; background: #fff; color: #7c8498; font-weight: 400; }
.control input, .control select { flex: 1; width: 100%; height: 16px; }
.control svg { color: #27324f; }
.control.locked { background: #f8fafc; border-color: #f8fafc; color: #5d6780; }
.swatch { width: 44px; height: 14px; margin-right: -2px; background: #f6c016; }
.count { margin-right: 7px; padding: 1px 5px; border-radius: 3px; background: #e7e9ec; }
.actions { display: flex; align-items: center; gap: 13px; flex: none; height: 27px; padding: 0 13px 0 14px; border-top: 1px solid #f4f5f7; }
.trash { margin-right: auto; color: #bfc3cc; }
.btn { width: 42px; height: 18px; border-radius: 3px; background: #e7e9ec; }
.btn.primary { width: 43px; }
.btn.primary, .confirm { background: #2459b2; color: #fff; }

/* Map tools */
.stage { display: flex; flex-direction: column; min-width: 0; min-height: 0; }
.map-tools { padding: 0 6px 0 16px; }
.stack { flex-direction: column; gap: 2px; margin-right: 16px; color: #4a5570; }
.stack svg { height: 11px; }
.stack span { color: #7c8498; }
.stack.faded, .stack.faded span { color: #bfc3cc; }
.accept { margin: 0 10px 0 2px; }
.nav-btn { width: 29px; height: 19px; margin: 0 7px 0 13px; border: 1px solid #a5abba; border-radius: 2px; }
.transport { display: flex; margin-right: 5px; color: #101c3d; }
.transport button { width: 24px; height: 20px; }
.reset { margin: 0 12px 0 13px; }
.assign { margin-right: 7px; }
.sim-menu { position: relative; align-self: stretch; z-index: 1; }
.sim-btn { width: 40px; height: 27px; margin: 0; background: #2459b2; color: #fff; }
.sim-btn span { color: #fff; }
.after-sim { margin: 0 12px 0 14px; }
.floor { width: 44px; height: 19px; margin-right: 7px; padding-left: 10px; border-color: #a5abba; color: #27324f; }
.view-tools { display: flex; color: #3a4562; }
.view-tools button, .doc-btn { width: 27px; height: 20px; }
.last { margin: 0 7px 0 auto; }

/* Simulation settings */
.popup { position: absolute; top: 29px; left: 0; display: flex; flex-direction: column; width: 201px; padding: 4px 10px 0; border-radius: 2px; background: #fff; }
.popup h3 { height: 20px; line-height: 20px; color: #1b2646; }
.popup .param + h3 { height: 21px; line-height: 21px; }
.param { display: flex; align-items: center; height: 20px; padding-left: 6px; white-space: nowrap; }
.param.fault { margin: 19px 0 15px; padding-left: 0; }
.stepper { display: flex; gap: 2px; margin-left: auto; }
.stepper > * { width: 14px; height: 14px; border: 1px solid #eef0f3; border-radius: 2px; text-align: center; }
.stepper input { width: 27px; background: #f8fafc; }
.stepper svg { width: 7px; color: #5d6780; }
.confirm { align-self: flex-end; width: 74px; height: 22px; border-radius: 2px; font-size: 9px; }

.canvas { flex: 1; min-height: 0; overflow: hidden; }
.map { width: 100%; height: 100%; }
.lines { fill: none; stroke: #8caecb; stroke-width: 1; }
.ticks { stroke: #8ba5bb; }
.stations { fill: none; stroke: #3e7dcc; stroke-width: 4; stroke-linecap: round; }
.names { font-size: 4px; fill: #555b66; }

/* Status bar */
.status { display: flex; align-items: center; gap: 12px; flex: none; height: 17px; padding: 0 13px 0 14px; background: #f8fafc; white-space: nowrap; }
.status-group { display: flex; align-items: center; }
.robots { gap: 10px; }
.orders { gap: 11px; margin-left: -4px; }
.alerts { gap: 9px; margin-left: -4px; }
.orders svg { margin-right: -2px; }
.robots svg { margin-right: -2px; }
.blue { color: #2459b2; }
.status em { margin-left: 8px; color: #7c8498; }
.status .rule { height: 9px; background: #dde0e5; }
.alert { display: flex; align-items: center; gap: 5px; color: #7c8498; }
.readout { display: flex; align-items: center; gap: 13px; margin-left: auto; color: #27324f; }
.readout em { margin-left: 4px; }
.readout .tight { margin: 0 -4px; }
.zoom { display: flex; align-items: center; gap: 7px; color: #7c8498; }
.zoom button:last-child { color: #27324f; }
```
